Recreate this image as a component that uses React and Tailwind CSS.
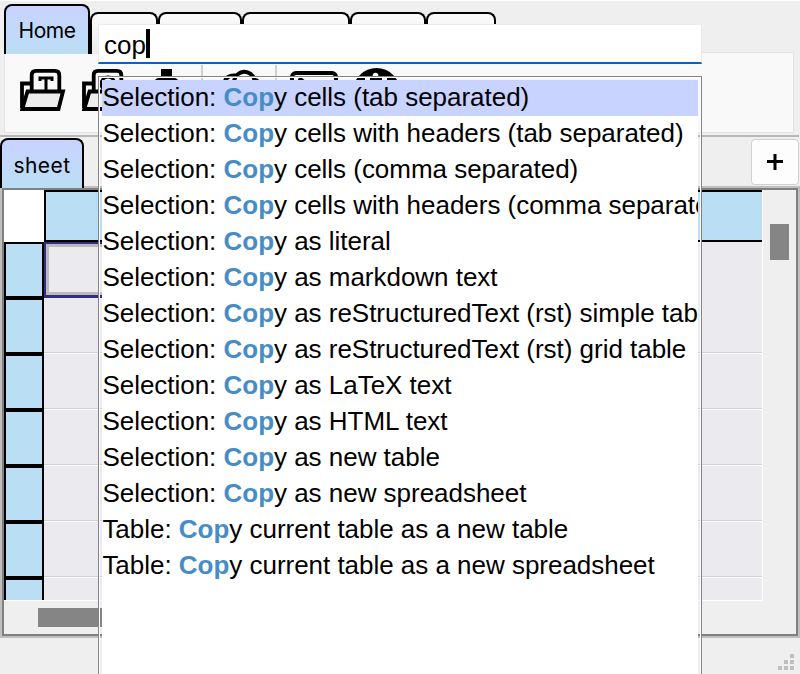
import React from 'react';

const ITEMS = [
  ['Selection: ', 'y cells (tab separated)'],
  ['Selection: ', 'y cells with headers (tab separated)'],
  ['Selection: ', 'y cells (comma separated)'],
  ['Selection: ', 'y cells with headers (comma separated)'],
  ['Selection: ', 'y as literal'],
  ['Selection: ', 'y as markdown text'],
  ['Selection: ', 'y as reStructuredText (rst) simple table'],
  ['Selection: ', 'y as reStructuredText (rst) grid table'],
  ['Selection: ', 'y as LaTeX text'],
  ['Selection: ', 'y as HTML text'],
  ['Selection: ', 'y as new table'],
  ['Selection: ', 'y as new spreadsheet'],
  ['Table: ', 'y current table as a new table'],
  ['Table: ', 'y current table as a new spreadsheet'],
];

function FolderIcon({ letter }) {
  return (
    <svg width="46" height="44" viewBox="0 0 46 44" className="shrink-0" fill="none" stroke="#000" strokeWidth="3.800">
      <path d="M12 15.500H2V40" />
      <path d="M11.700 23V7Q11.700 2.900 16 2.900H35Q39.300 2.900 39.300 7V23" fill="#f9f9f9" />
      {letter === 'T' ? <path d="M18.500 10H33.500M26 10V22M20 9V13M32 9V13" strokeWidth="3" /> : <circle cx="26" cy="16" r="7" strokeWidth="3" />}
      <path d="M2.300 41L7.500 23.500H43L38.500 41Z" fill="#ededed" />
    </svg>
  );
}

function Toolbar() {
  return (
    <div className="flex h-[81px] w-[790px] items-start border border-[#e3e3e3] bg-[#f9f9f9] pl-[15px] pt-[15px]">
      <FolderIcon letter="T" />
      <div className="w-4 shrink-0" />
      <FolderIcon letter="O" />
      <svg width="290" height="47" viewBox="128 65 290 47" className="-mt-[3px] shrink-0">
        <path d="M161 69h11v9h-11z" />
        <rect x="154" y="78" width="25" height="20" rx="5" />
        <path d="M202 65v46M276 65v46" stroke="#d0d0d0" strokeWidth="2" />
        <path d="M224.500 82Q227 74.500 236 75.500M234 81a10.500 11 0 0 1 20.500 -1q3 0 4 3" fill="none" stroke="#000" strokeWidth="4" />
        <rect x="292" y="73" width="44" height="32" rx="4" fill="none" stroke="#000" strokeWidth="4" />
        <path d="M299 78l6 5" stroke="#000" strokeWidth="4" />
        <circle cx="376.500" cy="91.500" r="23.500" />
        <circle cx="375.500" cy="75.500" r="2.800" fill="#f9f9f9" />
        <path d="M365 78h5v3h-5zM382 78h5v3h-5z" fill="#f9f9f9" />
      </svg>
    </div>
  );
}

function Tab({ className }) {
  return <div className={`h-[42px] rounded-t-lg border-2 border-b-0 border-black bg-linear-to-b from-[#fbfbfb] to-[#ececec] ${className}`} />;
}

function Sheet() {
  return (
    <div className="h-[452px] w-[800px] border-2 border-[#bfbfbf]">
      <div className="flex h-full flex-col border-2 border-[#808080] bg-[#efefef]">
        <div className="flex h-[410px]">
          <div className="w-10 shrink-0 overflow-hidden">
            <div className="h-[52px] bg-white" />
            {[0, 1, 2, 3, 4, 5, 6].map((i) => (
              <div key={i} className="h-14 border-2 border-black bg-[#badef4]" />
            ))}
          </div>
          <div className="w-[718px] shrink-0 overflow-hidden">
            <div className="h-[52px] border-y-2 border-l-2 border-black bg-[#badef4]" />
            <div className="h-14 bg-[#ebeaef]">
              <div className="h-14 w-60 border-2 border-b-[3px] border-[#30307f]">
                <div className="h-full border-[3px] border-[#bbbbbd]" />
              </div>
            </div>
            {[0, 1, 2, 3, 4, 5].map((i) => (
              <div key={i} className="h-14 border-b border-white bg-[#ebeaef]">
                <div className="h-[55px] border-b border-[#d2d2d4]" />
              </div>
            ))}
          </div>
          <div className="w-px bg-white" />
          <div className="pl-[7px] pt-[34px]">
            <div className="h-9 w-[19px] bg-[#858585]" />
          </div>
        </div>
        <div className="h-px w-[759px] bg-white" />
        <div className="ml-[34px] mt-[7px] h-[19px] w-[620px] bg-[#858585]" />
      </div>
    </div>
  );
}

function Palette() {
  return (
    <div className="absolute left-[98px] top-[23px] z-20 w-[604px] font-['Liberation_Sans',Arial,sans-serif] text-[26px] text-black">
      <div className="flex h-10 items-center border border-b-2 border-[#ebebeb] border-b-[#0067c0] bg-white pl-[5px]">
        <span className="pt-[3px] leading-9">cop</span>
        <span className="h-[29px] w-1 bg-black" />
      </div>
      <div className="mt-3 h-[640px] border border-[#82828a]">
        <div className="h-full border border-white p-[2px]">
          <ul className="h-full bg-white">
            {ITEMS.map(([scope, rest], i) => (
              <li key={i} className={`h-9 overflow-hidden whitespace-pre pl-[0.4px] leading-[35px] tracking-[-0.025px] ${i === 0 ? 'bg-[#c8d3ff]' : ''}`}>
                {scope}<b className="text-[#468dc8]">Cop</b>{rest}
              </li>
            ))}
          </ul>
        </div>
      </div>
    </div>
  );
}

export default function App() {
  return (
    <div className="relative h-[674px] w-[800px] overflow-hidden border-t border-white bg-[#efefef] font-['Inter',sans-serif] text-black">
      <div className="flex h-[53px] items-end pl-1 pt-[3px]">
        <div className="z-10 flex h-[50px] w-[86px] items-center justify-center rounded-t-lg border-2 border-b-0 border-black bg-linear-to-b from-[#c8d3ff] to-[#badef4] pt-[2px] text-[21px] tracking-[-0.5px]">Home</div>
        <Tab className="z-10 w-[68px]" />
        <Tab className="w-[84px]" />
        <Tab className="w-[108px]" />
        <Tab className="w-[76px]" />
        <Tab className="w-[70px]" />
      </div>
      <div className="-mt-[2px] pl-1"><Toolbar /></div>
      <div className="mt-[2px] h-[2px] w-[799px] bg-[#b8b8b8]" />
      <div className="flex h-[51px] justify-between pr-px pt-px">
        <div className="z-10 flex h-[50px] w-[84px] items-center justify-center rounded-t-lg border-2 border-b-0 border-black bg-linear-to-b from-[#c8d3ff] to-[#badef4] pt-1 text-[21px] tracking-[0.4px]">sheet</div>
        <div className="mt-px flex h-[46px] w-12 items-center justify-center rounded border border-[#d0d0d0] bg-[#fdfdfd]">
          <svg width="16" height="16" viewBox="0 0 16 16" stroke="#000" strokeWidth="3"><path d="M0 7.500H16M8 0V16" /></svg>
        </div>
      </div>
      <div className="-mt-[2px]"><Sheet /></div>
      <div className="mt-4 flex flex-col items-end gap-[2px] pr-[6px]">
        {[1, 2, 3].map((n) => (
          <div key={n} className="flex gap-[2px]">
            {Array.from({ length: n }, (_, i) => <i key={i} className="size-1 bg-[#bfbfbf]" />)}
          </div>
        ))}
      </div>
      <Palette />
    </div>
  );
}
